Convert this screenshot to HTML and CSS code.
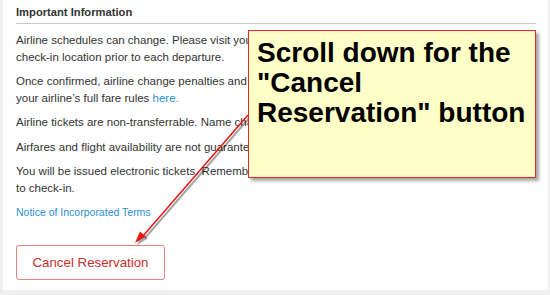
FILE: index.html
```html
<!DOCTYPE html>
<html>
<head>
<meta charset="utf-8"/>
<title>Important Information</title>
<link rel="stylesheet" href="styles.css">
</head>
<body>
<div class="card">
  <h4 class="info-title">Important Information</h4>

  <p>Airline schedules can change. Please visit your airline's website to confirm the<br>check-in location prior to each departure.</p>

  <p>Once confirmed, airline change penalties and restrictions apply. Please review<br>your airline&rsquo;s full fare rules <a href="#">here.</a></p>

  <p>Airline tickets are non-transferrable. Name changes are not permitted.</p>

  <p>Airfares and flight availability are not guaranteed until ticketed.</p>

  <p>You will be issued electronic tickets. Remember to bring a government-issued photo ID<br>to check-in.</p>

  <p class="terms"><a href="#">Notice of Incorporated Terms</a></p>

  <button class="cancel-btn">Cancel Reservation</button>
</div>

<svg class="arrow" width="550" height="295" viewBox="0 0 550 295">
  <g class="arrow-shadow">
    <line x1="250" y1="117" x2="145" y2="238"/>
    <polygon points="137,245 147.9,238.6 141.9,233.4"/>
  </g>
  <g class="arrow-line">
    <line x1="248" y1="115" x2="143" y2="236"/>
    <polygon points="135,243 145.9,236.6 139.9,231.4"/>
  </g>
</svg>

<div class="callout">Scroll down for the "Cancel Reservation" button</div>
</body>
</html>
```

FILE: styles.css
```css
body {
  margin: 0;
  background-color: #f0f0f0;
  font-family: "Liberation Sans", Arial, sans-serif;
  color: #333;
}

.card {
  margin-left: 3px;
  width: 545px;
  box-sizing: border-box;
  padding: 4px 12px 10px 13px;
  background-color: white;
}

.info-title {
  margin: 0 0 8px;
  padding-bottom: 2.5px;
  font-size: 11.2px;
  line-height: 16.5px;
  font-weight: bold;
  border-bottom: 1px solid #c8c8c8;
}

.card p {
  margin: 0 0 8px;
  font-size: 11.5px;
  line-height: 16.5px;
}

.card a {
  color: #2a8fd6;
  text-decoration: none;
}

.card p.terms {
  font-size: 10.5px;
  margin-bottom: 24px;
}

.cancel-btn {
  display: block;
  width: 149px;
  height: 35px;
  padding: 0;
  background: white;
  border: 1px solid #e0847e;
  border-radius: 3px;
  color: #c9302c;
  font-family: "Liberation Sans", Arial, sans-serif;
  font-size: 13.3px;
}

.arrow {
  position: absolute;
  left: 0;
  top: 0;
}

.arrow-shadow line {
  stroke: rgba(0, 0, 0, 0.35);
  stroke-width: 2;
}
.arrow-shadow polygon {
  fill: rgba(0, 0, 0, 0.35);
}

.arrow-line line {
  stroke: #e8191b;
  stroke-width: 1.6;
}
.arrow-line polygon {
  fill: #e8191b;
}

.callout {
  position: absolute;
  left: 248px;
  top: 30px;
  width: 288px;
  height: 148px;
  box-sizing: border-box;
  padding: 7px 8px 0;
  background-color: #ffffc8;
  border: 1px solid #e8262a;
  box-shadow: 3px 3px 3px rgba(0, 0, 0, 0.35);
  color: black;
  font-size: 28px;
  line-height: 30px;
  font-weight: bold;
}
```
